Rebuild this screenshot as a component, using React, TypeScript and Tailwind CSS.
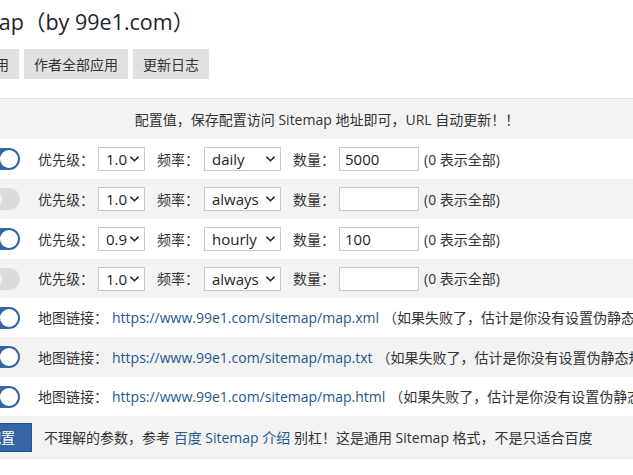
import { useState } from "react";

type SitemapRow = {
    on: boolean;
    priority: string;
    freq: string;
    count: string;
};

const initialRows: SitemapRow[] = [
    { on: true, priority: "1.0", freq: "daily", count: "5000" },
    { on: false, priority: "1.0", freq: "always", count: "" },
    { on: true, priority: "0.9", freq: "hourly", count: "100" },
    { on: false, priority: "1.0", freq: "always", count: "" },
];

const mapFiles = ["map.xml", "map.txt", "map.html"];
const priorities = ["1.0", "0.9", "0.8", "0.7", "0.6", "0.5"];
const freqs = ["always", "hourly", "daily", "weekly", "monthly", "yearly", "never"];

function Toggle({ on }: { on: boolean }) {
    return (
        <span
            className={`flex w-[38px] h-[22px] shrink-0 rounded-full p-[2px] ${
                on ? "bg-[#3465a4] justify-end" : "bg-[#dcdcdc] justify-start"
            }`}
        >
            <span className={`w-[18px] h-[18px] rounded-full ${on ? "bg-white" : "bg-[#f2f2f2]"}`} />
        </span>
    );
}

function Chevron() {
    return (
        <svg
            viewBox="0 0 10 6"
            className="pointer-events-none absolute right-[6px] top-[9px] w-[9px] h-[6px]"
            fill="none"
            stroke="#222"
            strokeWidth={1.8}
            strokeLinecap="round"
            strokeLinejoin="round"
        >
            <path d="M1 1l4 4 4-4" />
        </svg>
    );
}

function Select({ value, options, width }: { value: string; options: string[]; width: string }) {
    return (
        <span className={`relative inline-flex h-[24px] ${width}`}>
            <select
                defaultValue={value}
                className="w-full h-full appearance-none border border-[#c8c8c8] bg-white pl-[7px] pr-[10px] text-[15px] leading-[22px] text-[#1e1e1e] outline-none"
            >
                {options.map((o) => (
                    <option key={o} value={o}>
                        {o}
                    </option>
                ))}
            </select>
            <Chevron />
        </span>
    );
}

export default function App() {
    const [rows] = useState(initialRows);

    return (
        <div className="w-[633px] h-[475px] overflow-hidden bg-white text-[14px] text-[#333] font-['Open_Sans','Noto_Sans_CJK_SC',sans-serif]">
            <div className="-ml-[70px] w-[794px]">
                {/* title */}
                <h1 className="ml-[12px] pt-[7px] text-[21.5px] leading-[30px] font-normal text-[#1d2327] whitespace-nowrap">
                    Sitemap（by 99e1.com）
                </h1>

                {/* top buttons */}
                <div className="ml-[13px] mt-[12px] flex gap-[5px]">
                    {["推荐应用", "作者全部应用", "更新日志"].map((b) => (
                        <button key={b} className="h-[30px] px-[10px] bg-[#e0e1e3] text-[14px] text-[#333]">
                            {b}
                        </button>
                    ))}
                </div>

                {/* settings table */}
                <div className="mt-[19px] border-t border-b border-[#e4e4e4]">
                    <div className="h-[40px] flex items-center justify-center bg-[#f3f3f3]">
                        配置值，保存配置访问 Sitemap 地址即可，URL 自动更新！！
                    </div>

                    {rows.map((r, i) => (
                        <div
                            key={i}
                            className={`flex items-center whitespace-nowrap pl-[52px] ${
                                i === 3 ? "h-[39px]" : "h-[40px]"
                            } ${i % 2 === 0 ? "bg-white" : "bg-[#f3f3f3]"}`}
                        >
                            <Toggle on={r.on} />
                            <span className="ml-[18px]">优先级：</span>
                            <span className="ml-[4px]">
                                <Select value={r.priority} options={priorities} width="w-[47px]" />
                            </span>
                            <span className="ml-[12px]">频率：</span>
                            <span className="ml-[5px]">
                                <Select value={r.freq} options={freqs} width="w-[77px]" />
                            </span>
                            <span className="ml-[12px]">数量：</span>
                            <input
                                defaultValue={r.count}
                                className="ml-[4px] w-[80px] h-[24px] border border-[#c8c8c8] bg-white px-[5px] text-[15px] text-[#1e1e1e] outline-none"
                            />
                            <span className="ml-[5px]">(0 表示全部)</span>
                        </div>
                    ))}

                    {mapFiles.map((f, i) => (
                        <div
                            key={f}
                            className={`flex items-center whitespace-nowrap pl-[52px] ${
                                i === 1 ? "h-[40px]" : "h-[39px]"
                            } ${i % 2 === 0 ? "bg-white" : "bg-[#f3f3f3]"}`}
                        >
                            <Toggle on />
                            <span className="ml-[18px]">地图链接：</span>
                            <a href="#" className="ml-[4px] text-[#22578f]">
                                https://www.99e1.com/sitemap/{f}
                            </a>
                            <span className="ml-[4px]">（如果失败了，估计是你没有设置伪静态规则）</span>
                        </div>
                    ))}

                    <div className="h-[42px] flex items-center whitespace-nowrap pl-[12px] bg-[#f3f3f3]">
                        <button className="h-[29px] px-[16px] bg-[#3465a4] border border-[#22568a] text-white text-[14px]">
                            保存配置
                        </button>
                        <span className="ml-[12px]">
                            不理解的参数，参考{" "}
                            <a href="#" className="text-[#22578f]">
                                百度 Sitemap 介绍
                            </a>{" "}
                            别杠！这是通用 Sitemap 格式，不是只适合百度
                        </span>
                    </div>
                </div>
            </div>
        </div>
    );
}
